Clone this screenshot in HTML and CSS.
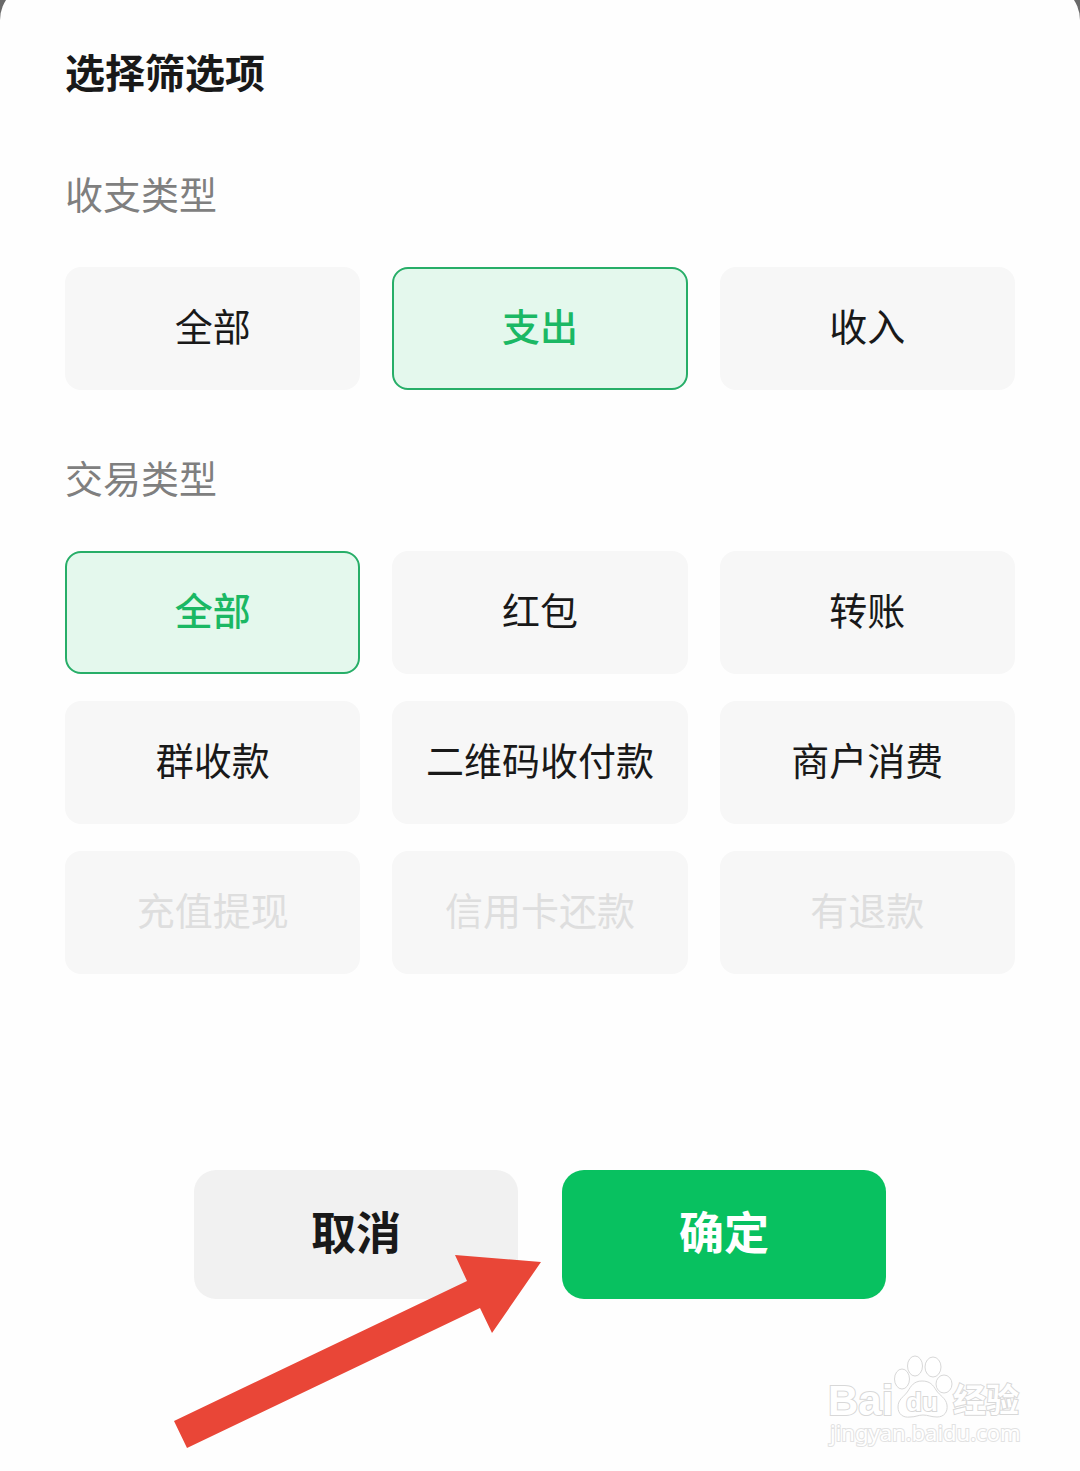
FILE: index.html
```html
<!DOCTYPE html>
<html lang="zh-CN">
<head>
  <meta charset="utf-8">
  <meta name="viewport" content="width=device-width, initial-scale=1">
  <title>选择筛选项</title>
  <link rel="stylesheet" href="styles.css">
</head>
<body>
  <main class="sheet">
    <h1 class="title">选择筛选项</h1>
    <form class="filters">
      <fieldset class="group">
        <legend class="group-name">收支类型</legend>
        <div class="options">
          <label class="option"><input type="radio" name="flow"><span>全部</span></label>
          <label class="option"><input type="radio" name="flow" checked><span>支出</span></label>
          <label class="option"><input type="radio" name="flow"><span>收入</span></label>
        </div>
      </fieldset>
      <fieldset class="group">
        <legend class="group-name">交易类型</legend>
        <div class="options">
          <label class="option"><input type="radio" name="kind" checked><span>全部</span></label>
          <label class="option"><input type="radio" name="kind"><span>红包</span></label>
          <label class="option"><input type="radio" name="kind"><span>转账</span></label>
          <label class="option"><input type="radio" name="kind"><span>群收款</span></label>
          <label class="option"><input type="radio" name="kind"><span>二维码收付款</span></label>
          <label class="option"><input type="radio" name="kind"><span>商户消费</span></label>
          <label class="option"><input type="radio" name="kind" disabled><span>充值提现</span></label>
          <label class="option"><input type="radio" name="kind" disabled><span>信用卡还款</span></label>
          <label class="option"><input type="radio" name="kind" disabled><span>有退款</span></label>
        </div>
      </fieldset>
      <div class="actions">
        <button class="button" type="button">取消</button>
        <button class="button button-primary" type="button">确定</button>
        <svg class="arrow" viewBox="0 0 368 194" aria-hidden="true">
          <path d="M0 166 293 26 281 0 367 7 318 78 306 53 13 193Z"/>
        </svg>
      </div>
    </form>
    <svg class="watermark" viewBox="0 0 198 96" role="img" aria-label="Baidu 经验">
      <text class="mark-latin" x="2" y="61">Bai</text>
      <ellipse cx="76" cy="25" rx="7.500" ry="10"/>
      <ellipse cx="89" cy="12" rx="7.500" ry="10"/>
      <ellipse cx="107" cy="13" rx="8" ry="10"/>
      <ellipse cx="118" cy="30" rx="8" ry="9"/>
      <path d="M96 27C88 27 85 32 82 37C78 43 72 45 72 53C72 60 77 64 84 63C90 63 92 61 97 61C102 61 105 63 111 63C118 63 122 58 121 51C120 44 114 42 110 36C107 31 104 27 96 27Z"/>
      <text class="mark-du" x="80" y="57">du</text>
      <text class="mark-cjk" x="127" y="58">经验</text>
      <text class="mark-url" x="4" y="87">jingyan.baidu.com</text>
    </svg>
  </main>
</body>
</html>
```

FILE: styles.css
```css
* {
  box-sizing: border-box;
}

body {
  margin: 0;
  overflow-x: hidden;
  background: #6a6a6a;
  color: #191919;
  font-family: "Noto Sans CJK SC", sans-serif;
}

/* The sheet slides up slightly past the top edge of the window. */
.sheet {
  position: relative;
  min-height: calc(100vh + 16px);
  margin-top: -16px;
  padding: 59px 65px 64px;
  border-radius: 36px 36px 0 0;
  background: #fefefe;
}

.title {
  margin: 0 0 68px;
  font-size: 40px;
  font-weight: 700;
  line-height: 56px;
}

.group {
  min-width: 0;
  margin: 0 0 61px;
  padding: 0;
  border: 0;
}

.group-name {
  margin-bottom: 48px;
  padding: 0;
  color: #7f7f7f;
  font-size: 38px;
  font-weight: 400;
  line-height: 52px;
}

.options {
  display: grid;
  grid-template-columns: repeat(3, 1fr);
  gap: 27px 32px;
}

.option {
  position: relative;
  display: flex;
}

.option input {
  position: absolute;
  inset: 0;
  width: 100%;
  height: 100%;
  margin: 0;
  opacity: 0;
}

.option span {
  flex: 1;
  padding: 30px 0 37px;
  border: 2px solid #f7f7f7;
  border-radius: 16px;
  background: #f7f7f7;
  font-size: 38px;
  line-height: 52px;
  text-align: center;
  white-space: nowrap;
}

.option input:checked + span {
  border-color: #27ae68;
  background: #e4f8ed;
  color: #1bb864;
  font-weight: 500;
}

.option input:disabled + span {
  color: #dedede;
}

.actions {
  position: relative;
  display: flex;
  gap: 44px;
  width: fit-content;
  margin: 196px auto 0;
}

.button {
  width: 324px;
  padding: 31px 0 38px;
  border: 0;
  border-radius: 22px;
  background: #f1f1f1;
  color: #191919;
  font: 700 45px/60px "Noto Sans CJK SC", sans-serif;
}

.button-primary {
  background: #08c160;
  color: #fff;
}

.arrow {
  position: absolute;
  top: 85px;
  left: -20px;
  width: 368px;
  fill: #e94637;
  pointer-events: none;
}

.watermark {
  position: absolute;
  right: 56px;
  bottom: 21px;
  width: 198px;
  fill: #fff;
  stroke: #d8d8d8;
}

.watermark text {
  paint-order: stroke;
  stroke-width: 2px;
}

.mark-latin {
  font: 700 42px "Liberation Sans", sans-serif;
}

.mark-du {
  font: 700 26px "Liberation Sans", sans-serif;
}

.mark-cjk {
  font: 700 33px "Noto Sans CJK SC", sans-serif;
}

.watermark .mark-url {
  font: 400 22px "Noto Sans", sans-serif;
  stroke: #e2e2e2;
}
```
